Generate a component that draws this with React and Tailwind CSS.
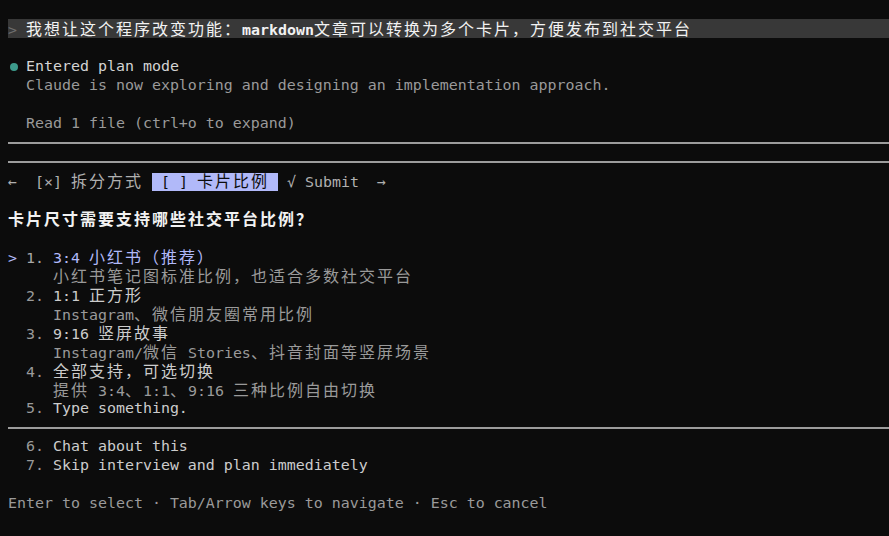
import React from "react";

const WIDE = /([\u2E80-\u9FFF\u3000-\u303F\uFF00-\uFFEF]+)/;

function T({ children, className = "" }) {
  const parts = String(children).split(WIDE);
  return (
    <span className={className}>
      {parts.map((p, i) =>
        i % 2 === 1 ? (
          <span
            key={i}
            className="font-['Noto_Sans_CJK_SC',sans-serif] text-[16px] tracking-[2px]"
          >
            {p}
          </span>
        ) : (
          <React.Fragment key={i}>{p}</React.Fragment>
        )
      )}
    </span>
  );
}

function Line({ children, className = "" }) {
  return (
    <div className={`h-[19px] leading-[19px] whitespace-pre pl-2 overflow-visible ${className}`}>
      {children}
    </div>
  );
}

function Rule() {
  return (
    <div className="h-[19px] flex items-center pl-2">
      <div className="h-[2px] w-full bg-[#9c9c9c]" />
    </div>
  );
}

const DIM = "text-[#9a9a9a]";
const LIGHT = "text-[#cccccc]";
const LAV = "text-[#b1b9f9]";

function Option({ num, title, desc }) {
  return (
    <>
      <Line>
        <T className={DIM}>{`  ${num}. `}</T>
        <T className={LIGHT}>{title}</T>
      </Line>
      {desc && (
        <Line>
          <T className={DIM}>{`     ${desc}`}</T>
        </Line>
      )}
    </>
  );
}

export default function App() {
  return (
    <div className="min-h-screen w-full overflow-hidden bg-[#0c0c0c] font-['DejaVu_Sans_Mono','Noto_Sans_CJK_SC',monospace] text-[14.95px] text-[#cccccc]">
      <Line />
      <div className="h-[19px] leading-[19px] whitespace-pre pl-2">
        <div className="h-full bg-[#383838]">
          <span className="text-[#6e6e6e]">{"> "}</span>
          <T className="text-[#f2f2f2]">我想让这个程序改变功能：</T>
          <span className="text-[#f2f2f2] font-bold">markdown</span>
          <T className="text-[#f2f2f2]">文章可以转换为多个卡片，方便发布到社交平台</T>
        </div>
      </div>
      <Line />
      <Line>
        <span className="inline-flex w-[9px] items-center justify-center align-middle h-[19px]">
          <span className="block w-[8px] h-[8px] rounded-full bg-[#3d9b8c] translate-x-[1px]" />
        </span>
        <span className="text-[#d4d4d4]">{" Entered plan mode"}</span>
      </Line>
      <Line>
        <span className={DIM}>{"  Claude is now exploring and designing an implementation approach."}</span>
      </Line>
      <Line />
      <Line>
        <span className={DIM}>{"  Read 1 file (ctrl+o to expand)"}</span>
      </Line>
      <Rule />
      <Rule />
      <Line>
        <T className="text-[#b0b0b0]">{"←  [×] 拆分方式 "}</T>
        <span className="bg-[#b1b9f9] text-[#0c0c0c]">
          <T>{" [ ] 卡片比例 "}</T>
        </span>
        <T className="text-[#b0b0b0]">{" √ Submit  →"}</T>
      </Line>
      <Line />
      <Line className="font-bold text-[#f2f2f2]">
        <T>卡片尺寸需要支持哪些社交平台比例？</T>
      </Line>
      <Line />
      <Line>
        <span className={LAV}>{"> "}</span>
        <span className="text-[#a8a8a8]">{"1. "}</span>
        <T className={LAV}>3:4 小红书（推荐）</T>
      </Line>
      <Line>
        <T className={DIM}>{"     小红书笔记图标准比例，也适合多数社交平台"}</T>
      </Line>
      <Option num="2" title="1:1 正方形" desc="Instagram、微信朋友圈常用比例" />
      <Option num="3" title="9:16 竖屏故事" desc="Instagram/微信 Stories、抖音封面等竖屏场景" />
      <Option num="4" title="全部支持，可选切换" desc="提供 3:4、1:1、9:16 三种比例自由切换" />
      <Option num="5" title="Type something." />
      <Rule />
      <Option num="6" title="Chat about this" />
      <Option num="7" title="Skip interview and plan immediately" />
      <Line />
      <Line>
        <span className={DIM}>{"Enter to select · Tab/Arrow keys to navigate · Esc to cancel"}</span>
      </Line>
    </div>
  );
}
